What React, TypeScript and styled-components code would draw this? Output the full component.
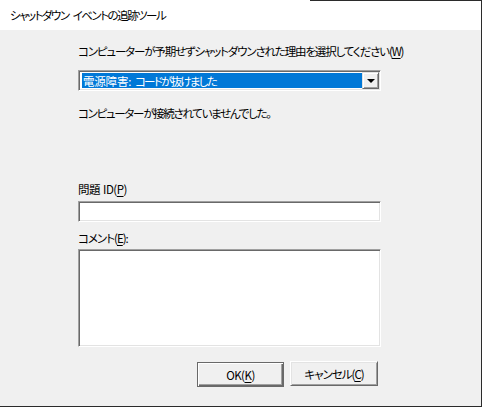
import React from "react";
import styled, { createGlobalStyle } from "styled-components";

const Global = createGlobalStyle`
  html, body { margin: 0; padding: 0; background: #f0f0f0; }
  body { font-family: "Noto Sans CJK JP", "Noto Sans", sans-serif; }
`;

const Window = styled.div`
  width: 482px;
  height: 407px;
  box-sizing: border-box;
  border-right: 1px solid #2b2b2b;
  border-bottom: 1px solid #2b2b2b;
  display: flex;
  flex-direction: column;
  background: #f0f0f0;
  font-family: "Noto Sans CJK JP", "Noto Sans", sans-serif;
  font-size: 11.5px;
  font-feature-settings: "palt";
  color: #000;
  overflow: hidden;
`;

const TitleBar = styled.div`
  height: 30px;
  flex: none;
  display: flex;
  align-items: center;
  padding-left: 10px;
  background: linear-gradient(#2b2b2b, #2b2b2b) 310px 0 / 100% 1px no-repeat, #fff;
  letter-spacing: -1.5px;
  word-spacing: 3px;
  white-space: pre;
`;

const Body = styled.div`
  flex: 1;
  display: flex;
  flex-direction: column;
  padding-left: 78px;
  width: 303px;
`;

const Label = styled.div<{ $mt: number; $ls: number }>`
  height: 16px;
  line-height: 16px;
  margin-top: ${(p) => p.$mt}px;
  letter-spacing: ${(p) => p.$ls}px;
  word-spacing: 1px;
  white-space: pre;
  u { text-decoration-thickness: 1px; text-underline-offset: 2px; }
`;

const sunken = `
  box-sizing: border-box;
  border: 1px solid;
  border-color: #a0a0a0 #fff #fff #a0a0a0;
  box-shadow: inset 1px 1px 0 #696969, inset -1px -1px 0 #e3e3e3;
`;

const Combo = styled.div<{ $mt: number }>`
  ${sunken}
  margin-top: ${(p) => p.$mt}px;
  height: 21px;
  width: 303px;
  background: #fff;
  display: flex;
  padding: 2px 1px 2px 3px;
`;

const ComboValue = styled.div`
  flex: 1;
  background: #0078d7;
  color: #fff;
  line-height: 17px;
  padding-left: 1px;
  white-space: pre;
  letter-spacing: -1.75px;
  word-spacing: 3px;
`;

const Kanji = styled.span`
  letter-spacing: -0.2px;
`;

const DropButton = styled.div`
  width: 17px;
  flex: none;
  box-sizing: border-box;
  margin: -1px 0;
  background: #f0f0f0;
  border: 1px solid;
  border-color: #e3e3e3 #696969 #696969 #e3e3e3;
  box-shadow: inset 1px 1px 0 #fff, inset -1px -1px 0 #a0a0a0;
  display: flex;
  align-items: center;
  justify-content: center;
`;

const Arrow = styled.div`
  width: 0;
  height: 0;
  border-left: 4px solid transparent;
  border-right: 4px solid transparent;
  border-top: 4px solid #000;
`;

const Field = styled.div<{ $mt: number; $h: number }>`
  ${sunken}
  margin-top: ${(p) => p.$mt}px;
  height: ${(p) => p.$h}px;
  width: 303px;
  background: #fff;
`;

const ButtonRow = styled.div`
  margin-top: 14px;
  padding-left: 119px;
  display: flex;
  gap: 6px;
`;

const Button = styled.div<{ $default?: boolean; $w: number; $ls: number }>`
  box-sizing: border-box;
  width: ${(p) => p.$w}px;
  height: 25px;
  display: flex;
  align-items: center;
  justify-content: center;
  background: #f0f0f0;
  letter-spacing: ${(p) => p.$ls}px;
  white-space: pre;
  margin-top: ${(p) => (p.$default ? 1 : 0)}px;
  border: 1px solid;
  border-color: ${(p) => (p.$default ? "#696969" : "#fff #696969 #696969 #fff")};
  box-shadow: ${(p) =>
    p.$default
      ? "inset 1px 1px 0 #fff, inset -1px -1px 0 #696969, inset -2px -2px 0 #a0a0a0"
      : "inset 1px 1px 0 #e3e3e3, inset -1px -1px 0 #a0a0a0"};
  u { text-decoration-thickness: 1px; text-underline-offset: 2px; }
`;

export default function App() {
  return (
    <>
      <Global />
      <Window>
        <TitleBar>シャットダウン イベントの追跡ツール</TitleBar>
        <Body>
          <Label $mt={13} $ls={-1.15}>
            コンピューターが予期せずシャットダウンされた理由を選択してください(<u>W</u>)
          </Label>
          <Combo $mt={11}>
            <ComboValue>
              <Kanji>電源障害:</Kanji> コードが抜けました
            </ComboValue>
            <DropButton>
              <Arrow />
            </DropButton>
          </Combo>
          <Label $mt={14} $ls={-1.3}>
            コンピューターが接続されていませんでした。
          </Label>
          <Label $mt={60} $ls={-0.5}>
            問題 ID(<u>P</u>)
          </Label>
          <Field $mt={4} $h={21} />
          <Label $mt={8} $ls={-1}>
            コメント(<u>E</u>):
          </Label>
          <Field $mt={3} $h={98} />
          <ButtonRow>
            <Button $default $w={87} $ls={-0.5}>
              OK(<u>K</u>)
            </Button>
            <Button $w={88} $ls={-1}>
              キャンセル(<u>C</u>)
            </Button>
          </ButtonRow>
        </Body>
      </Window>
    </>
  );
}
